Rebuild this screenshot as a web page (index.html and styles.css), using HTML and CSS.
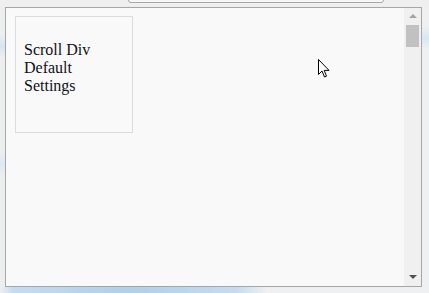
FILE: index.html
```html
<!DOCTYPE html>
<html>
<head>
<meta charset="utf-8">
<link rel="stylesheet" href="styles.css">
</head>
<body>
<div class="screen">
  <div class="topbar"><div class="field"></div></div>
  <div class="middle">
    <div class="edge-left"></div>
    <div class="window">
      <div class="content">
        <div class="card"><p class="label">Scroll Div<br>Default<br>Settings</p></div>
      </div>
      <div class="scrollbar">
        <div class="arrow-up"></div>
        <div class="thumb"></div>
        <div class="track"></div>
        <div class="arrow-down"></div>
      </div>
    </div>
    <div class="edge-right"></div>
  </div>
  <div class="bottom"></div>
</div>
<svg class="cursor" width="13" height="20" viewBox="0 0 13 20">
  <path d="M0.5 0.5 L0.5 15.5 L4 12 L6.5 18 L8.5 17.2 L6.2 11.4 L11 11.4 Z" fill="#fff" stroke="#000" stroke-width="1" stroke-linejoin="miter"/>
</svg>
</body>
</html>
```
FILE: styles.css
```css
html, body {
  margin: 0;
  padding: 0;
}
body {
  width: 429px;
  height: 293px;
  overflow: hidden;
  background: #eef0f2;
  position: relative;
}
.screen {
  display: flex;
  flex-direction: column;
  width: 429px;
  height: 293px;
}
.topbar {
  height: 7px;
  background: #efefef;
  position: relative;
  overflow: hidden;
}
.field {
  margin-left: 128px;
  margin-top: -10px;
  width: 254px;
  height: 11px;
  border: 1px solid #a8a8a8;
  border-radius: 3px;
  background: #f6f6f6;
}
.middle {
  display: flex;
  height: 280px;
}
.edge-left {
  width: 5px;
  background: linear-gradient(180deg, #eceef0 0%, #eceef0 10%, #d6e4f1 14%, #eceef0 18%, #eceef0 52%, #dde8f3 56%, #eceef0 60%, #eceef0 100%);
}
.edge-right {
  width: 7px;
  background: linear-gradient(180deg, #eef0f2 0%, #eef0f2 7%, #d9e6f2 11%, #eef0f2 15%, #eef0f2 100%);
}
.window {
  display: flex;
  width: 415px;
  height: 278px;
  border: 1px solid #a6a6a6;
  background: #f9f9f9;
}
.content {
  flex: 1;
  padding: 8px 0 0 9px;
  background: #f9f9f9;
}
.card {
  width: 116px;
  height: 115px;
  border: 1px solid #dcdcdc;
  box-sizing: content-box;
}
.label {
  margin: 0;
  padding: 24px 0 0 8px;
  font-family: "Liberation Serif", "Tinos", "DejaVu Serif", serif;
  font-size: 16px;
  line-height: 18px;
  color: #101018;
}
.scrollbar {
  width: 17px;
  background: #f0f0f0;
  display: flex;
  flex-direction: column;
  align-items: center;
}
.arrow-up {
  margin-top: 6px;
  width: 0;
  height: 0;
  border-left: 4px solid transparent;
  border-right: 4px solid transparent;
  border-bottom: 4px solid #a3a3a3;
}
.thumb {
  margin-top: 7px;
  width: 13px;
  height: 22px;
  background: #c1c1c1;
}
.track {
  flex: 1;
}
.arrow-down {
  margin-bottom: 7px;
  width: 0;
  height: 0;
  border-left: 4px solid transparent;
  border-right: 4px solid transparent;
  border-top: 4px solid #505050;
}
.bottom {
  height: 6px;
  background: linear-gradient(90deg, #eef0f2 0%, #c6dcee 3%, #b0cfe8 30%, #c6dcee 55%, #eef0f2 62%, #eef0f2 100%);
}
.cursor {
  position: absolute;
  left: 318px;
  top: 59px;
}
```
